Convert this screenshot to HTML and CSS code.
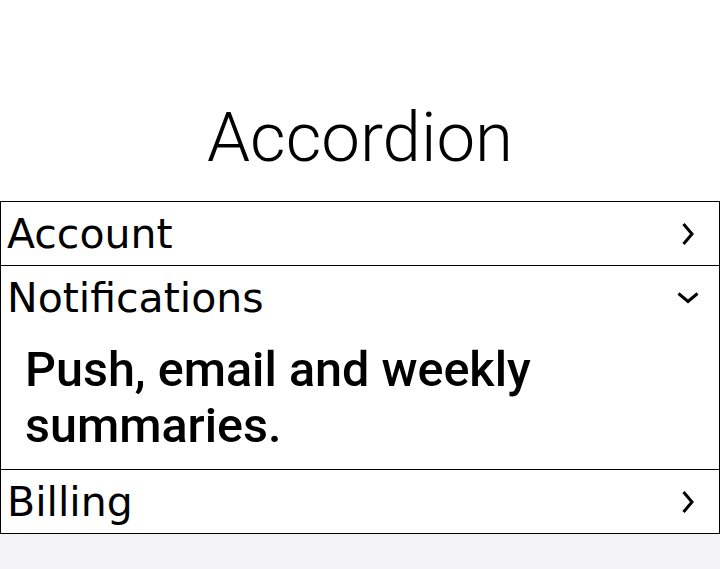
FILE: index.html
```html
<!DOCTYPE html>
<html>
<head>
    <meta charset="UTF-8">
    <title>Accordion</title>
    <link rel="stylesheet" href="styles.css">
</head>
<body>
    <div class="page">
        <h1 class="title">Accordion</h1>

        <div class="accordion">
            <div class="item">
                <div class="item-header">
                    <span class="item-label">Account</span>
                    <svg class="chevron" width="24" height="24" viewBox="0 0 24 24">
                        <polyline points="7.5,2 16,12 7.5,22" />
                    </svg>
                </div>
            </div>

            <div class="item open">
                <div class="item-header">
                    <span class="item-label">Notifications</span>
                    <svg class="chevron" width="24" height="24" viewBox="0 0 24 24">
                        <polyline points="2.5,7.5 12,15.5 21.5,7.5" />
                    </svg>
                </div>
                <div class="item-body">
                    Push, email and weekly summaries.
                </div>
            </div>

            <div class="item">
                <div class="item-header">
                    <span class="item-label">Billing</span>
                    <svg class="chevron" width="24" height="24" viewBox="0 0 24 24">
                        <polyline points="7.5,2 16,12 7.5,22" />
                    </svg>
                </div>
            </div>
        </div>
    </div>
</body>
</html>
```

FILE: styles.css
```css
body {
    margin: 0;
    background-color: #f2f2f7;
    color: #000;
}
.page {
    background-color: #fff;
}
.title {
    margin: 0;
    padding: 98px 0 23px;
    font-family: Roboto, sans-serif;
    font-weight: 300;
    font-size: 69px;
    line-height: 80px;
    text-align: center;
}
.accordion {
    border: 1px solid #000;
    border-bottom: none;
}
.item {
    border-bottom: 1px solid #000;
}
.item-header {
    height: 63px;
    display: flex;
    align-items: center;
    justify-content: space-between;
    padding: 0 19px 0 6px;
    font-family: "DejaVu Sans", sans-serif;
    font-size: 41px;
}
.chevron {
    fill: none;
    stroke: #000;
    stroke-width: 3;
}
.item-body {
    padding: 13px 24px 15px;
    font-family: Roboto, sans-serif;
    font-weight: 500;
    font-size: 48.5px;
    line-height: 56px;
}
```
